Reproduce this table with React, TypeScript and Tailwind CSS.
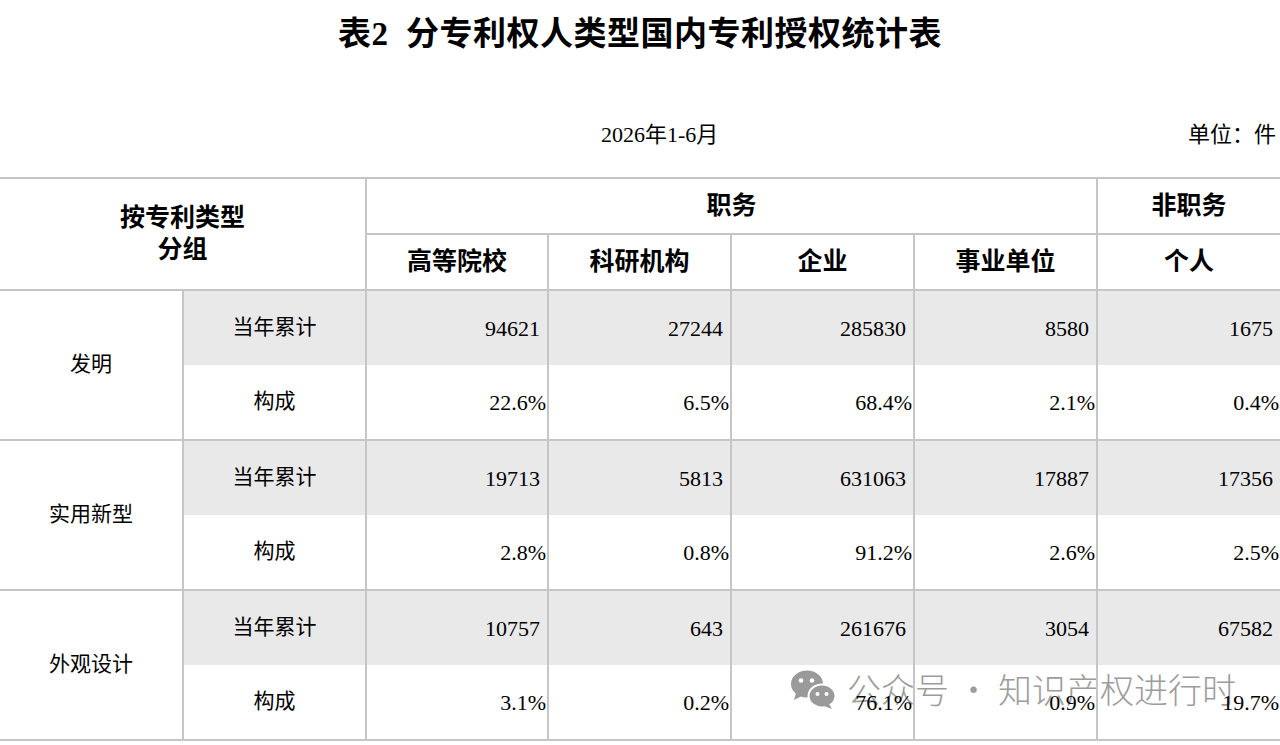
import React from "react";

const serif = { fontFamily: '"Liberation Serif", "Noto Sans CJK SC", serif' };

const groups = [
  {
    name: "发明",
    counts: ["94621", "27244", "285830", "8580", "1675"],
    shares: ["22.6%", "6.5%", "68.4%", "2.1%", "0.4%"],
  },
  {
    name: "实用新型",
    counts: ["19713", "5813", "631063", "17887", "17356"],
    shares: ["2.8%", "0.8%", "91.2%", "2.6%", "2.5%"],
  },
  {
    name: "外观设计",
    counts: ["10757", "643", "261676", "3054", "67582"],
    shares: ["3.1%", "0.2%", "76.1%", "0.9%", "19.7%"],
  },
];

const subHeads = ["高等院校", "科研机构", "企业", "事业单位", "个人"];

function WeChatMark() {
  return (
    <svg width="48" height="42" viewBox="0 0 48 42">
      <ellipse cx="18" cy="16" rx="16" ry="13.5" fill="#9a9a9a" />
      <path d="M7 25 L5 32 L13 28 Z" fill="#9a9a9a" />
      <circle cx="12" cy="12.5" r="2.3" fill="#fff" />
      <circle cx="23" cy="12.5" r="2.3" fill="#fff" />
      <ellipse cx="33" cy="28" rx="13.5" ry="11.5" fill="#9a9a9a" stroke="#fff" strokeWidth="2" />
      <path d="M40 36 L43 41 L35 38 Z" fill="#9a9a9a" />
      <circle cx="28.5" cy="26" r="2" fill="#fff" />
      <circle cx="37.5" cy="26" r="2" fill="#fff" />
    </svg>
  );
}

export default function App() {
  const cell = "border-2 border-[#c6c6c6]";

  return (
    <div className="relative w-[1280px] h-[745px] overflow-hidden bg-white text-black" style={serif}>
      <h1 className="h-[70px] flex items-center justify-center text-[33px] font-bold tracking-[0.5px]">
        表2&nbsp;&nbsp;分专利权人类型国内专利授权统计表
      </h1>

      <div className="h-[107px] pt-[21px] flex items-center text-[22px]">
        <div className="w-[601px]" />
        <span>2026年1-6月</span>
        <div className="flex-1" />
        <span className="pr-[4px]">单位：件</span>
      </div>

      {/* watermark */}
      <div className="absolute left-[789px] top-[668px] z-0 flex items-center gap-[10px]">
        <WeChatMark />
        <span
          className="text-[34px] text-[#9c9c9c] font-light leading-none"
          style={{ fontFamily: '"Noto Sans CJK SC", sans-serif' }}
        >
          公众号 · 知识产权进行时
        </span>
      </div>

      <table className="relative z-10 w-[1280px] border-collapse table-fixed">
        <colgroup>
          <col className="w-[183px]" />
          <col className="w-[183px]" />
          <col className="w-[182px]" />
          <col className="w-[183px]" />
          <col className="w-[183px]" />
          <col className="w-[183px]" />
          <col className="w-[183px]" />
        </colgroup>
        <thead>
          <tr>
            <th
              rowSpan={2}
              colSpan={2}
              className={`${cell} border-l-0 text-[25px] font-bold leading-[32px] text-center`}
            >
              按专利类型
              <br />
              分组
            </th>
            <th colSpan={4} className={`${cell} h-[56px] text-[25px] font-bold text-center`}>
              职务
            </th>
            <th className={`${cell} border-r-0 h-[56px] text-[25px] font-bold text-center`}>非职务</th>
          </tr>
          <tr>
            {subHeads.map((h, i) => (
              <th
                key={h}
                className={`${cell} h-[56px] text-[25px] font-bold text-center ${i === 4 ? "border-r-0" : ""}`}
              >
                {h}
              </th>
            ))}
          </tr>
        </thead>
        <tbody className="text-[21px]">
          {groups.map((g) => (
            <React.Fragment key={g.name}>
              <tr>
                <td rowSpan={2} className={`${cell} border-l-0 text-center`}>
                  {g.name}
                </td>
                <td className={`${cell} border-b-0 h-[75px] bg-[#e9e9e9] text-center`}>当年累计</td>
                {g.counts.map((v, i) => (
                  <td
                    key={i}
                    className={`${cell} border-b-0 bg-[#e9e9e9] text-right pr-[7px] text-[22px] ${
                      i === 4 ? "border-r-0" : ""
                    }`}
                  >
                    {v}
                  </td>
                ))}
              </tr>
              <tr>
                <td className={`${cell} border-t-0 h-[75px] text-center`}>构成</td>
                {g.shares.map((v, i) => (
                  <td
                    key={i}
                    className={`${cell} border-t-0 text-right pr-[1px] text-[22px] ${
                      i === 4 ? "border-r-0" : ""
                    }`}
                  >
                    {v}
                  </td>
                ))}
              </tr>
            </React.Fragment>
          ))}
        </tbody>
      </table>
    </div>
  );
}
